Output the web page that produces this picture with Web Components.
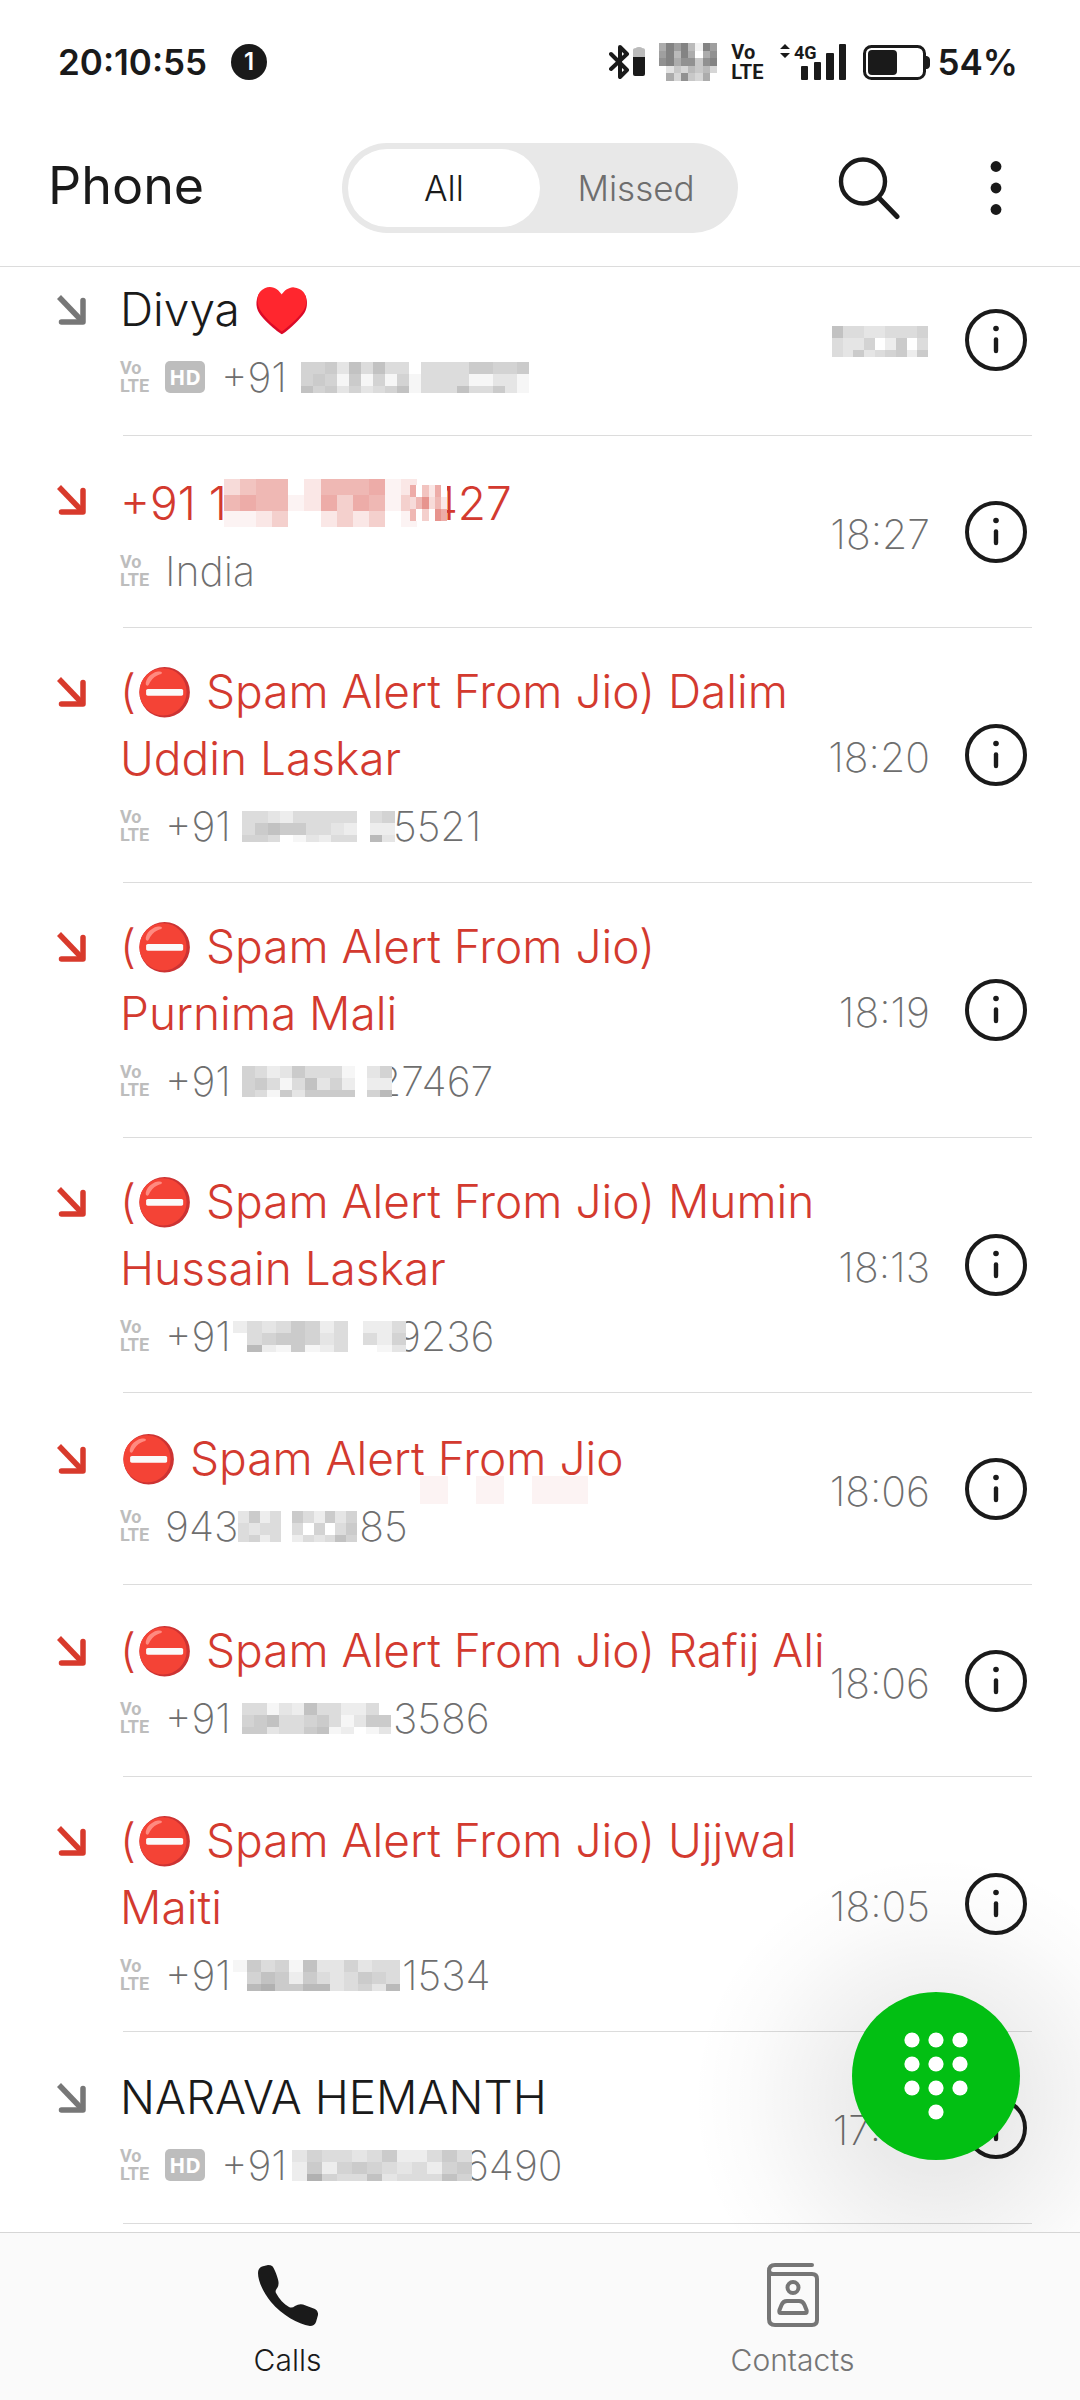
<!DOCTYPE html>
<html lang="en">
<head>
<meta charset="utf-8">
<meta name="viewport" content="width=device-width, initial-scale=1">
<title>Phone</title>
<style>
  body {
    margin: 0;
    background: #fff;
    color: #1a1a1a;
    font-family: Inter, Roboto, sans-serif;
  }
</style>
</head>
<body>
<phone-app>
  <call-item hd>
    Divya ♥️
    <span slot="detail">+91</span>
    <pixel-mask slot="detail" width="228" before="14" cells="5563747440444466556/5651615151444411331/7563534571444744631"></pixel-mask>
    <pixel-mask slot="time" width="96" after="2" cells="744334445/433502604/436345626"></pixel-mask>
  </call-item>
  <call-item missed>
    <span>+91 1</span><pixel-mask width="193" height="48" before="-3" after="-7" cells="356602666712/676612747614/112400242401"></pixel-mask><pixel-mask width="37" height="36" after="-18" cells="705270/369362/604097"></pixel-mask><span>427</span>
    <span slot="detail">India</span>
    <span slot="time">18:27</span>
  </call-item>
  <call-item missed>
    (⛔ Spam Alert From Jio) Dalim Uddin Laskar
    <span slot="detail">+91</span>
    <pixel-mask slot="detail" width="153" before="11" after="-2" cells="443244444045/467664432022/554013244083"></pixel-mask>
    <span slot="detail">5521</span>
    <span slot="time">18:20</span>
  </call-item>
  <call-item missed>
    (⛔ Spam Alert From Jio) Purnima Mali
    <span slot="detail">+91</span>
    <pixel-mask slot="detail" width="150" before="11" after="-16" cells="542364441035/564147352022/541636666058"></pixel-mask>
    <span slot="detail">27467</span>
    <span slot="time">18:19</span>
  </call-item>
  <call-item missed>
    (⛔ Spam Alert From Jio) Mumin Hussain Laskar
    <span slot="detail">+91</span>
    <pixel-mask slot="detail" width="173" before="2" after="-9" cells="243465240224/045665340425/082161240013"></pixel-mask>
    <span slot="detail">9236</span>
    <span slot="time">18:13</span>
  </call-item>
  <call-item missed>
    ⛔ Spam Alert From Jio
    <pixel-mask slot="smudge" width="196" height="28" cells="1010110"></pixel-mask>
    <span slot="detail">943</span>
    <pixel-mask slot="detail" width="119" after="2" cells="36240642635/43440405046/45240243475"></pixel-mask>
    <span slot="detail">85</span>
    <span slot="time">18:06</span>
  </call-item>
  <call-item missed>
    (⛔ Spam Alert From Jio) Rafij Ali
    <span slot="detail">+91</span>
    <pixel-mask slot="detail" width="149" before="11" after="2" cells="441327442240/567445641366/663446712013"></pixel-mask>
    <span slot="detail">3586</span>
    <span slot="time">18:06</span>
  </call-item>
  <call-item missed>
    (⛔ Spam Alert From Jio) Ujjwal Maiti
    <span slot="detail">+91</span>
    <pixel-mask slot="detail" width="167" before="2" after="2" cells="164517335344/057626434654/089668834538"></pixel-mask>
    <span slot="detail">1534</span>
    <span slot="time">18:05</span>
  </call-item>
  <call-item hd>
    NARAVA HEMANTH
    <span slot="detail">+91</span>
    <pixel-mask slot="detail" width="180" before="5" after="-7" cells="354434622464/262565434256/295447344475"></pixel-mask>
    <span slot="detail">6490</span>
    <span slot="time">17:52</span>
  </call-item>
</phone-app>

<script>
// Blocked-out run of characters. Each digit is the strength of one block.
class PixelMask extends HTMLElement {
  constructor() {
    super();
    this.attachShadow({ mode: 'open' });
  }

  connectedCallback() {
    const rows = this.getAttribute('cells').split('/');
    const width = this.getAttribute('width');
    const height = this.getAttribute('height') || 31;
    const heights = this.hasAttribute('height') ? rows.map(() => 12) : [12, 12, 7];
    let y = 0;
    let rects = '';
    rows.forEach((row, i) => {
      [...row].forEach((d, x) => {
        if (d !== '0') {
          rects += `<rect x="${x}" y="${y}" width="1" height="${heights[i]}" opacity="${(d * 0.06).toFixed(2)}"/>`;
        }
      });
      y += heights[i];
    });
    this.shadowRoot.innerHTML = `
      <style>
        :host {
          display: inline-block;
          flex: none;
          position: relative;
          width: ${width}px;
          height: ${height}px;
          margin-left: ${this.getAttribute('before') || 0}px;
          margin-right: ${this.getAttribute('after') || 0}px;
          background: #fff;
        }
        svg { display: block; width: 100%; height: 100%; }
      </style>
      <svg viewBox="0 0 ${rows[0].length} ${y}" preserveAspectRatio="none" fill="currentColor" shape-rendering="crispEdges" aria-hidden="true">${rects}</svg>
    `;
  }
}

class StatusBar extends HTMLElement {
  constructor() {
    super();
    this.attachShadow({ mode: 'open' });
    this.shadowRoot.innerHTML = `
      <style>
        :host {
          display: flex;
          align-items: center;
          justify-content: space-between;
          padding: 38px 62px 0 58px;
          height: 48px;
          font-size: 35px;
          font-weight: 600;
          line-height: 48px;
        }
        div { display: flex; align-items: center; }
        svg { display: block; flex: none; }
        .left { gap: 24px; }
        .count {
          width: 36px;
          height: 36px;
          border-radius: 50%;
          background: #1a1a1a;
          color: #fff;
          font-size: 24px;
          line-height: 36px;
          text-align: center;
        }
        .bt { margin-right: 14px; }
        .volte {
          margin: 0 16px 0 14px;
          font: 700 20px/20px Roboto, sans-serif;
        }
        .signal { margin-right: 16px; overflow: visible; }
        .signal text { font: 700 18px Roboto, sans-serif; }
        .battery { margin-right: 7px; }
      </style>
      <div class="left"><span>20:10:55</span><span class="count">1</span></div>
      <div>
        <svg class="bt" width="36" height="38" viewBox="0 0 36 38" fill="none" stroke="#1a1a1a" stroke-width="4" stroke-linejoin="round" stroke-linecap="round">
          <path d="M2 11 L18 27 L11 34 V4 L18 11 L2 26"/>
          <path d="M24 7 q0-2 3-2 q0-1 3-1 q3 0 3 1 q3 0 3 2 V14 H24Z" fill="#bbb" stroke="none"/>
          <path d="M24 14 H36 V31 q0 2-2 2 H26 q-2 0-2-2Z" fill="#1a1a1a" stroke="none"/>
        </svg>
        <pixel-mask width="58" height="38" cells="69795197/79596068/89688489/02435453/06384360"></pixel-mask>
        <span class="volte">Vo<br>LTE</span>
        <svg class="signal" width="67" height="42" viewBox="0 -2 67 42" fill="#1a1a1a">
          <path d="M5 1 L10 6 H0Z M0 10 H10 L5 15Z"/>
          <text x="14" y="16">4G</text>
          <rect x="21" y="23" width="7" height="14" rx="1"/>
          <rect x="34" y="19" width="7" height="18" rx="1"/>
          <rect x="46" y="10" width="8" height="27" rx="1"/>
          <rect x="59" y="1" width="7" height="36" rx="1"/>
        </svg>
        <svg class="battery" width="68" height="36" viewBox="0 0 68 36" fill="#1a1a1a">
          <rect x="1.5" y="2.5" width="60" height="32" rx="7" fill="none" stroke="#1a1a1a" stroke-width="3"/>
          <rect x="5" y="6" width="29" height="25" rx="4"/>
          <path d="M62 12 h2 q3 1 3 4 v5 q0 3-3 4 h-2Z"/>
        </svg>
        <span>54%</span>
      </div>
    `;
  }
}

class AppHeader extends HTMLElement {
  constructor() {
    super();
    this.attachShadow({ mode: 'open' });
    this.shadowRoot.innerHTML = `
      <style>
        :host {
          display: block;
          position: sticky;
          top: 0;
          z-index: 2;
          background: #fff;
          border-bottom: 1px solid #dcdcdc;
        }
        .bar {
          display: grid;
          grid-template-columns: 1fr auto 1fr;
          align-items: center;
          height: 90px;
          padding: 57px 48px 33px;
        }
        h1 { margin: 0; padding-bottom: 4px; font-size: 52px; font-weight: 400; line-height: 64px; }
        .tabs {
          display: flex;
          padding: 6px;
          border-radius: 45px;
          background: #e8e8e8;
        }
        button {
          border: 0;
          padding: 0;
          background: none;
          color: inherit;
          font: inherit;
        }
        .tabs button {
          width: 192px;
          height: 78px;
          border-radius: 39px;
          color: #6e6e6e;
          font-size: 35px;
          font-weight: 300;
        }
        .tabs button[aria-selected="true"] { background: #fff; color: #1a1a1a; }
        .actions { display: flex; justify-content: flex-end; gap: 62px; }
        svg { display: block; }
      </style>
      <status-bar></status-bar>
      <div class="bar">
        <h1>Phone</h1>
        <div class="tabs" role="tablist">
          <button type="button" role="tab" aria-selected="true">All</button>
          <button type="button" role="tab" aria-selected="false">Missed</button>
        </div>
        <div class="actions">
          <button type="button" aria-label="Search">
            <svg width="66" height="64" viewBox="0 0 66 64" fill="none" stroke="#1a1a1a" stroke-linecap="round">
              <circle cx="25" cy="25.500" r="22" stroke-width="4.400"/>
              <path d="M42 43 L59 60.500" stroke-width="5"/>
            </svg>
          </button>
          <button type="button" aria-label="More options">
            <svg width="66" height="64" viewBox="0 0 66 64" fill="#1a1a1a">
              <circle cx="30" cy="10.500" r="5.400"/><circle cx="30" cy="32" r="5.400"/><circle cx="30" cy="53.500" r="5.400"/>
            </svg>
          </button>
        </div>
      </div>
    `;
    this.shadowRoot.querySelectorAll('[role="tab"]').forEach((tab, i, tabs) => {
      tab.onclick = () => tabs.forEach(t => t.setAttribute('aria-selected', String(t === tab)));
    });
  }
}

class CallItem extends HTMLElement {
  constructor() {
    super();
    this.attachShadow({ mode: 'open' });
  }

  connectedCallback() {
    const missed = this.hasAttribute('missed');
    const hd = this.hasAttribute('hd');

    this.shadowRoot.innerHTML = `
      <style>
        :host { display: block; }
        .row {
          display: flex;
          align-items: center;
          min-height: 191px;
          padding: 0 53px 0 56px;
        }
        .entry {
          display: grid;
          grid-template-columns: 64px 1fr;
          flex: 1;
          min-width: 0;
          padding: 30px 0;
        }
        .direction {
          display: flex;
          align-items: center;
          height: 67px;
          color: ${missed ? '#d83a2c' : '#777'};
        }
        .name {
          position: relative;
          color: ${missed ? '#d33a2f' : '#1a1a1a'};
          font-size: 46px;
          font-weight: 300;
          line-height: 67px;
        }
        .name ::slotted(*) { vertical-align: middle; }
        .smudge {
          position: absolute;
          left: 300px;
          bottom: -12px;
          display: flex;
        }
        .detail {
          grid-column: 2;
          display: flex;
          align-items: center;
          margin-top: 8px;
          color: #6e6e6e;
          font-size: 41px;
          font-weight: 200;
          line-height: 52px;
          white-space: nowrap;
        }
        .volte {
          width: 30px;
          margin-right: 15px;
          color: #bdbdbd;
          font: 700 18px/18px Roboto, sans-serif;
        }
        .hd {
          width: 40px;
          height: 32px;
          margin-right: 16px;
          border-radius: 5px;
          background: #bdbdbd;
          color: #fff;
          font: 700 21px/32px "Open Sans", sans-serif;
          text-align: center;
        }
        .time {
          min-width: 104px;
          padding-top: 4px;
          color: #6e6e6e;
          font-size: 41px;
          font-weight: 200;
          line-height: 52px;
          text-align: right;
        }
        button {
          flex: none;
          margin-left: 35px;
          border: 0;
          padding: 0;
          background: none;
        }
        svg { display: block; }
        hr {
          height: 1px;
          margin: 0 48px 0 123px;
          border: 0;
          background: #dcdcdc;
        }
      </style>
      <div class="row">
        <div class="entry">
          <div class="direction">
            <svg width="30" height="30" viewBox="0 0 30 30" fill="none" stroke="currentColor" stroke-width="5.500" aria-hidden="true">
              <path d="M3 2 L26 26"/>
              <path d="M5.500 27 H27 V5.500" stroke-linejoin="round" stroke-linecap="round"/>
            </svg>
          </div>
          <div class="name"><slot></slot><span class="smudge"><slot name="smudge"></slot></span></div>
          <div class="detail">
            <span class="volte">Vo<br>LTE</span>
            ${hd ? '<span class="hd">HD</span>' : ''}
            <slot name="detail"></slot>
          </div>
        </div>
        <div class="time"><slot name="time"></slot></div>
        <button type="button" aria-label="Call details">
          <svg width="62" height="62" viewBox="0 0 62 62" fill="none" stroke="#1a1a1a" stroke-linecap="round">
            <circle cx="31" cy="31" r="29" stroke-width="4"/>
            <path d="M31 30.500 V42" stroke-width="4.400"/>
            <circle cx="31" cy="19.500" r="2.800" fill="#1a1a1a" stroke="none"/>
          </svg>
        </button>
      </div>
      <hr>
    `;
  }
}

class BottomNav extends HTMLElement {
  constructor() {
    super();
    this.attachShadow({ mode: 'open' });
    this.shadowRoot.innerHTML = `
      <style>
        :host {
          display: block;
          position: sticky;
          bottom: 0;
          z-index: 2;
          border-top: 1px solid #d6d6d6;
          background: #fafafa;
        }
        nav {
          display: grid;
          grid-template-columns: 1fr 1fr;
          padding: 28px 35px 21px;
        }
        a {
          display: flex;
          flex-direction: column;
          align-items: center;
          gap: 14px;
          color: #757575;
          font-size: 30px;
          font-weight: 300;
          line-height: 38px;
          text-decoration: none;
        }
        a[aria-current] { color: #1a1a1a; }
        svg { display: block; }
      </style>
      <nav>
        <a href="#calls" aria-current="page">
          <svg width="60" height="66" viewBox="0 -4 60 66" fill="currentColor" aria-hidden="true">
            <path d="M14 1 C16 2 20.500 14 20.500 17 Q21 21 18.500 24 Q17 26 18 28 C21 34 26 39 31 42 Q34 43.500 37 41 Q41 38.500 45 39.500 L57 44 Q60.500 46 60 50 L58 57 Q56.500 61 52 61 C40 59 24 50 13 37 C5 27 0 16 0 8 Q0 3 4 1.500 L10 0 Q13 0 14 1Z"/>
          </svg>
          Calls
        </a>
        <a href="#contacts">
          <svg width="52" height="66" viewBox="0 -2 52 66" fill="none" stroke="currentColor" stroke-width="4" stroke-linecap="round" aria-hidden="true">
            <path d="M45 2 H8 Q2 2 2 8 V56 Q2 62 8 62 H45 Q50 62 50 57 V16 Q50 11 45 11 H6 Q2 11 2 7"/>
            <circle cx="26" cy="24.500" r="5.500"/>
            <path d="M20 38 H32 Q36 38 37.500 42 L39.500 47 Q40.500 50 38 50 H14 Q11.500 50 12.500 47 L14.500 42 Q16 38 20 38Z"/>
          </svg>
          Contacts
        </a>
      </nav>
    `;
  }
}

class DialButton extends HTMLElement {
  constructor() {
    super();
    this.attachShadow({ mode: 'open' });
    const dots = [[0, 0], [1, 0], [2, 0], [0, 1], [1, 1], [2, 1], [0, 2], [1, 2], [2, 2], [1, 3]]
      .map(([x, y]) => `<circle cx="${8 + x * 24}" cy="${8 + y * 24}" r="7.600"/>`)
      .join('');
    this.shadowRoot.innerHTML = `
      <style>
        :host { display: block; }
        /* wide soft shadow, a little lower than the button */
        :host::before {
          content: "";
          position: absolute;
          inset: -136px -160px -184px;
          border-radius: 50%;
          background: radial-gradient(closest-side, rgba(0, 0, 0, 0.08) 30%, rgba(0, 0, 0, 0.05) 50%, rgba(0, 0, 0, 0.015) 78%, transparent);
          pointer-events: none;
        }
        button {
          display: grid;
          place-items: center;
          position: relative;
          width: 168px;
          height: 168px;
          border: 0;
          border-radius: 50%;
          padding: 0;
          background: #02bf13;
        }
      </style>
      <button type="button" aria-label="Dial pad">
        <svg width="64" height="88" viewBox="0 0 64 88" fill="#fff">${dots}</svg>
      </button>
    `;
  }
}

class PhoneApp extends HTMLElement {
  constructor() {
    super();
    this.attachShadow({ mode: 'open' });
    this.shadowRoot.innerHTML = `
      <style>
        :host {
          display: flex;
          flex-direction: column;
          min-height: 100vh;
        }
        main {
          position: relative;
          flex: 1;
          overflow: hidden;
        }
        /* the list is scrolled a little way under the header */
        .list { margin-top: -23px; }
        dial-button {
          position: absolute;
          right: 60px;
          bottom: 72px;
        }
      </style>
      <app-header></app-header>
      <main>
        <div class="list"><slot></slot></div>
        <dial-button></dial-button>
      </main>
      <bottom-nav></bottom-nav>
    `;
  }
}

customElements.define('pixel-mask', PixelMask);
customElements.define('status-bar', StatusBar);
customElements.define('app-header', AppHeader);
customElements.define('call-item', CallItem);
customElements.define('bottom-nav', BottomNav);
customElements.define('dial-button', DialButton);
customElements.define('phone-app', PhoneApp);
</script>
</body>
</html>
